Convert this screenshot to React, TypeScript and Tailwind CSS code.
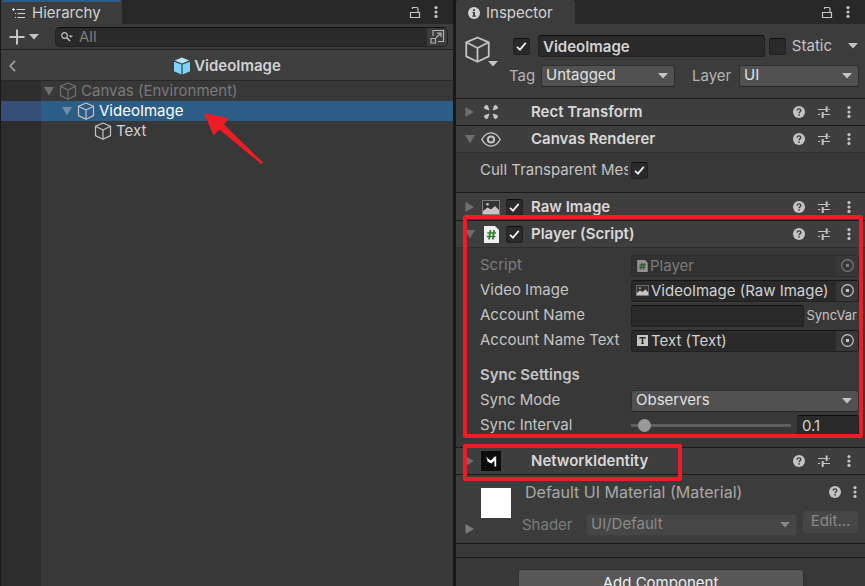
import { useState } from "react";
import type { ReactNode } from "react";
import clsx from "clsx";

type IconProps = { className?: string };

function CubeIcon({ className }: IconProps) {
	return (
		<svg viewBox="0 0 18 18" fill="none" stroke="currentColor" strokeWidth="1.2" strokeLinejoin="round" className={clsx("shrink-0", className)}>
			<path d="M9 1 16.5 4.2V13.6L9 17.2 1.500 13.6V4.200Z" />
			<path d="M1.500 4.200 9 8 16.500 4.200M9 8V17.200" />
		</svg>
	);
}

function PrefabIcon() {
	return (
		<svg viewBox="0 0 18 18" className="size-[18px] shrink-0">
			<path d="M9 .5 16.300 3.500 9 6.500 1.700 3.500Z" fill="#b5e6fb" />
			<path d="M1 4.700 8.400 7.600V17.500L1 14.300Z" fill="#7dd4fa" />
			<path d="M17 4.700 9.600 7.600V17.500L17 14.300Z" fill="#7dd4fa" />
		</svg>
	);
}

function Caret({ className }: IconProps) {
	return (
		<svg viewBox="0 0 10 6" fill="currentColor" className={clsx("h-[6px] w-[10px] shrink-0", className)}>
			<path d="M0 0H10L5 5.500Z" />
		</svg>
	);
}

function Foldout({ open, className }: { open: boolean; className?: string }) {
	return (
		<svg viewBox="0 0 10 10" fill="currentColor" className={clsx("size-[10px] shrink-0", className)}>
			{open ? <path d="M0 1H10L5 9.500Z" /> : <path d="M.5 0V10L9 5Z" />}
		</svg>
	);
}

function LockIcon() {
	return (
		<svg viewBox="0 0 12 13" fill="none" stroke="currentColor" strokeWidth="1.200" className="h-[13px] w-[12px]">
			<path d="M1.500 6.500H10.500V11.500H1.500ZM3 1.500H7.600Q9 1.500 9 3V6.500M3.500 1V3" />
		</svg>
	);
}

function DotsIcon() {
	return (
		<svg viewBox="0 0 4 12" fill="currentColor" className="h-[12px] w-[4px]">
			<circle cx="2" cy="1.600" r="1.600" />
			<circle cx="2" cy="6" r="1.600" />
			<circle cx="2" cy="10.400" r="1.600" />
		</svg>
	);
}

function HelpIcon() {
	return (
		<svg viewBox="0 0 12 12" className="size-[12px]">
			<circle cx="6" cy="6" r="6" fill="currentColor" />
			<path d="M4.100 4.600Q4.200 2.900 6 2.900T7.900 4.500Q7.900 5.300 6.900 5.900 6.100 6.400 6.100 7.200" fill="none" stroke="#3c3c3c" strokeWidth="1.400" />
			<rect x="5.300" y="8.200" width="1.500" height="1.500" fill="#3c3c3c" />
		</svg>
	);
}

function PresetIcon() {
	return (
		<svg viewBox="0 0 12 12" fill="none" stroke="currentColor" className="size-[12px]">
			<path d="M0 3.500H8M0 8.500H2M4.500 8.500H12M10.500 3.500H12" />
			<path d="M8.700 .5V6M4.700 6V12" strokeWidth="2" />
		</svg>
	);
}

function InfoIcon() {
	return (
		<svg viewBox="0 0 12 12" className="size-[12px]">
			<circle cx="6" cy="6" r="6" fill="currentColor" />
			<path d="M5 2.200H7V4H5ZM4.500 5H7V8.500H8V9.700H4.300V8.500H5.200V6.200H4.500Z" fill="#3c3c3c" />
		</svg>
	);
}

function HierarchyIcon() {
	return (
		<svg viewBox="0 0 14 11" stroke="currentColor" strokeWidth="1.200" className="h-[11px] w-[14px]">
			<path d="M0 1.500H3M1.500 0V3M4.500 1.500H13M5.500 5.500H13M5.500 9.500H13M3 5.500H4M3 9.500H4" />
		</svg>
	);
}

function RectTransformIcon() {
	return (
		<svg viewBox="0 0 16 16" fill="currentColor" className="size-[16px]">
			<path d="M.8 3.200 3.200.8 5 1.700 6.500 6.500 1.700 5ZM15.200 3.200 12.800.8 11 1.700 9.500 6.500 14.300 5ZM.8 12.800 3.200 15.200 5 14.300 6.500 9.500 1.700 11ZM15.200 12.800 12.800 15.200 11 14.300 9.500 9.500 14.300 11Z" />
		</svg>
	);
}

function EyeIcon() {
	return (
		<svg viewBox="0 0 20 15" fill="none" stroke="currentColor" strokeWidth="1.400" className="h-[15px] w-[20px]">
			<path d="M.800 7.500Q4.500 .900 10 .900T19.200 7.500Q15.500 14.100 10 14.100T.800 7.500Z" />
			<circle cx="10" cy="7.500" r="3.100" strokeWidth="2" />
		</svg>
	);
}

function PictureIcon({ className }: IconProps) {
	return (
		<svg viewBox="0 0 18 15" className={clsx("shrink-0", className)}>
			<rect x=".5" y=".5" width="17" height="14" fill="#333333" stroke="#7c7c7c" />
			<path d="M1 11 5.500 7.500 9 9.500 13 6 17 10V14H1Z" fill="#c4c4c4" />
			<circle cx="5.500" cy="4.200" r="1.300" fill="#c4c4c4" />
		</svg>
	);
}

function ScriptIcon({ className }: IconProps) {
	return (
		<svg viewBox="0 0 15 17" className={clsx("shrink-0", className)}>
			<path d="M0 0H11L15 4V17H0Z" fill="#f0f0f0" />
			<path d="M6.500 4 5 13.500M10.200 4 8.700 13.500M3.300 7H12M2.800 10.500H11.500" stroke="#2f7d32" strokeWidth="1.700" fill="none" />
		</svg>
	);
}

function TextAssetIcon() {
	return (
		<svg viewBox="0 0 11 11" className="mr-px ml-px size-[11px] shrink-0">
			<rect width="11" height="11" fill="#c4c4c4" />
			<path d="M2.500 2H8.500V4H7.500V3.200H6.300V8.300H7V9H4V8.300H4.700V3.200H3.500V4H2.500Z" fill="#2a2a2a" />
		</svg>
	);
}

function MirrorIcon() {
	return (
		<svg viewBox="0 0 20 20" className="size-[20px]">
			<rect width="20" height="20" fill="#0c0c0c" />
			<path d="M4.700 5.700 10 9.500 13.700 5.500H15.200V15.500H13.400V9.500L10.500 12.500 6.500 10.500 6.200 8.300Z" fill="#fff" />
		</svg>
	);
}

function TargetIcon() {
	return (
		<svg viewBox="0 0 13 13" fill="none" stroke="currentColor" className="size-[13px]">
			<circle cx="6.500" cy="6.500" r="5.800" strokeWidth="1.200" />
			<rect x="5" y="5" width="3" height="3" fill="currentColor" stroke="none" />
		</svg>
	);
}

function IconButton({ label, children, className }: { label: string; children: ReactNode; className?: string }) {
	return (
		<button aria-label={label} className={clsx("flex shrink-0 items-center justify-center text-[#c4c4c4]", className)}>
			{children}
		</button>
	);
}

function Checkbox({ id, label, defaultChecked = false }: { id?: string; label?: string; defaultChecked?: boolean }) {
	return (
		<span className="grid size-[17px] shrink-0 place-items-center">
			<input
				id={id}
				type="checkbox"
				aria-label={label}
				defaultChecked={defaultChecked}
				className="peer col-start-1 row-start-1 size-[17px] appearance-none rounded-[3px] border border-[#212121] border-t-[#0f0f0f] bg-[#2a2a2a]"
			/>
			<svg viewBox="0 0 12 10" fill="none" stroke="#f0f0f0" strokeWidth="1.900" className="pointer-events-none invisible col-start-1 row-start-1 h-[9px] w-[11px] peer-checked:visible">
				<path d="M1 5.300 4.300 8.500 10.700 1" />
			</svg>
		</span>
	);
}

function Dropdown({ id, value, disabled = false, className }: { id: string; value: string; disabled?: boolean; className?: string }) {
	return (
		<span className={clsx("grid min-w-0 items-center", className)}>
			<select
				id={id}
				disabled={disabled}
				className={clsx(
					"col-start-1 row-start-1 h-[22px] w-full appearance-none rounded-[3px] border px-1 pb-[2px] text-[15px] leading-[18px]",
					disabled ? "border-[#3f3f3f] bg-[#464646] text-[#8a8a8a] opacity-100" : "border-[#303030] border-b-[#242424] bg-[#515151] text-[#e0e0e0]",
				)}
			>
				<option>{value}</option>
			</select>
			<Caret className={clsx("pointer-events-none col-start-1 row-start-1 mr-[7px] justify-self-end", disabled ? "text-[#8a8a8a]" : "text-[#c4c4c4]")} />
		</span>
	);
}

function PanelTab({ title, icon, active, className }: { title: string; icon: ReactNode; active?: boolean; className?: string }) {
	return (
		<header className="flex h-6 shrink-0 items-center bg-[#282828] text-[#d2d2d2]">
			<h2 className={clsx("flex h-6 items-center rounded-t-[3px] border-t-2 bg-[#3c3c3c] text-[15px]", active ? "border-[#2c5d87]" : "border-[#3c3c3c]", className)}>
				{icon}
				{title}
			</h2>
			<IconButton label="Lock" className="ml-auto w-5">
				<LockIcon />
			</IconButton>
			<IconButton label={`${title} menu`} className="mr-[15px] ml-[9px] w-[4px]">
				<DotsIcon />
			</IconButton>
		</header>
	);
}

function TreeRow({ name, indent, leaf, dim, selected }: { name: string; indent: string; leaf?: boolean; dim?: boolean; selected?: boolean }) {
	return (
		<li className={clsx("flex h-5 items-stretch", selected && "bg-[#2c5d87]")}>
			<span className={clsx("w-10 shrink-0", selected ? "bg-[#364f79]" : "bg-[#2d2d2d]")} />
			<button className={clsx("flex items-center text-[15px] leading-5", indent, dim ? "text-[#7a7a7a]" : selected ? "text-white" : "text-[#d2d2d2]")}>
				{!leaf && <Foldout open className={clsx("mr-[5px]", selected ? "text-[#6f8ba5]" : "text-[#6e6e6e]")} />}
				<CubeIcon className={clsx("mr-1 size-[18px]", dim ? "text-[#707070]" : "text-[#c4c4c4]")} />
				{name}
			</button>
		</li>
	);
}

function Hierarchy() {
	return (
		<section className="flex min-w-0 flex-col bg-[#383838]">
			<PanelTab title="Hierarchy" icon={<HierarchyIcon />} active className="gap-[6px] pr-[21px] pl-[11px]" />
			<div className="flex h-[26px] shrink-0 items-center border-b border-[#232323] bg-[#3c3c3c]">
				<IconButton label="Create" className="ml-2 gap-1">
					<svg viewBox="0 0 16 16" stroke="currentColor" strokeWidth="2" className="size-[16px]">
						<path d="M8 .5V15.500M.5 8H15.500" />
					</svg>
					<Caret />
				</IconButton>
				<div className="mr-[5px] ml-4 flex h-5 min-w-0 flex-1 items-center overflow-hidden rounded-[5px] border border-[#212121] border-t-[#0f0f0f] bg-[#2a2a2a]">
					<svg viewBox="0 0 12 10" fill="none" stroke="#c4c4c4" strokeWidth="1.200" className="ml-[5px] h-[10px] w-[12px] shrink-0">
						<circle cx="3.500" cy="3.500" r="2.800" />
						<path d="M5.500 5.500 9 9" strokeWidth="1.500" />
						<path d="M7.500 3.500H12L9.800 5.800Z" fill="#c4c4c4" stroke="none" />
					</svg>
					<input aria-label="Search hierarchy" placeholder="All" className="ml-[6px] min-w-0 flex-1 bg-transparent text-[15px] leading-[18px] outline-none placeholder:text-[#7c7c7c]" />
					<IconButton label="Open in search window" className="h-full w-5 bg-[#3c3c3c]">
						<svg viewBox="0 0 15 15" fill="none" stroke="#b0b0b0" strokeWidth="1.200" className="size-[15px]">
							<path d="M3 7V1.500H13.500V12.500H8M1 9.500H5.500V14H1ZM6 8.700 10.500 4.500M7 4.200H11V8" />
						</svg>
					</IconButton>
				</div>
			</div>
			<div className="grid h-[31px] shrink-0 grid-cols-[22px_1fr_22px] items-center border-b border-[#282828] bg-[#3f3f3f] pt-[2px]">
				<IconButton label="Back">
					<svg viewBox="0 0 7 12" fill="none" stroke="#a0a0a0" strokeWidth="1.700" className="h-[12px] w-[7px]">
						<path d="M6 .8 1.200 6 6 11.200" />
					</svg>
				</IconButton>
				<h3 className="flex items-center justify-center gap-[3px] text-[15px] font-semibold text-[#d2d2d2]">
					<PrefabIcon />
					VideoImage
				</h3>
			</div>
			<div className="relative flex flex-1 flex-col">
				<ul>
					<TreeRow name="Canvas (Environment)" indent="pl-[3px]" dim />
					<TreeRow name="VideoImage" indent="pl-[21px]" selected />
					<TreeRow name="Text" indent="pl-[53px]" leaf />
				</ul>
				<div className="w-10 flex-1 bg-[#2d2d2d]" />
				<svg viewBox="0 0 60 52" fill="#ee1c24" className="pointer-events-none absolute top-8 left-[203px] h-[52px] w-[60px]">
					<path d="M0 0 24.500 5 20 11.500 58.500 49Q59 52 56.500 50.500L15.500 16.500 9.500 22.500Z" />
				</svg>
			</div>
		</section>
	);
}

function ComponentHeader({ title, icon, open = false, toggle = false }: { title: string; icon: ReactNode; open?: boolean; toggle?: boolean }) {
	return (
		<div className={clsx("flex h-[27px] shrink-0 items-center border-b bg-[#3e3e3e] pr-[14px] pl-[9px]", open ? "border-[#303030]" : "border-[#1a1a1a]")}>
			<button aria-label={`Fold ${title}`} className="text-[#6e6e6e]">
				<Foldout open={open} />
			</button>
			<span className="ml-[6px] flex w-5 items-center justify-center text-[#c4c4c4]">{icon}</span>
			<span className="ml-[5px] flex w-[25px]">{toggle && <Checkbox label={`Enable ${title}`} defaultChecked />}</span>
			<h3 className="flex-1 truncate pt-px text-[15px] font-semibold text-[#d8d8d8]">{title}</h3>
			<IconButton label={`${title} help`}>
				<HelpIcon />
			</IconButton>
			<IconButton label={`${title} presets`} className="ml-[13px]">
				<PresetIcon />
			</IconButton>
			<IconButton label={`${title} menu`} className="ml-[17px]">
				<DotsIcon />
			</IconButton>
		</div>
	);
}

function PropertyRow({ label, htmlFor, dim, children }: { label: string; htmlFor: string; dim?: boolean; children: ReactNode }) {
	return (
		<div className="flex h-[25px] items-center pr-[6px] pl-6">
			<label htmlFor={htmlFor} className={clsx("mr-[3px] w-[148px] shrink-0 overflow-hidden text-[15px] whitespace-nowrap", dim ? "text-[#7c7c7c]" : "text-[#c4c4c4]")}>
				{label}
			</label>
			{children}
		</div>
	);
}

function ObjectField({ id, value, icon, disabled = false }: { id: string; value: string; icon: ReactNode; disabled?: boolean }) {
	return (
		<div className={clsx("flex h-[22px] min-w-0 flex-1 items-center rounded-[3px] border pl-1", disabled ? "border-[#2c2c2c] bg-[#323232] text-[#7c7c7c]" : "border-[#212121] border-t-[#151515] bg-[#2a2a2a] text-[#d2d2d2]")}>
			{icon}
			<input id={id} readOnly disabled={disabled} value={value} className="ml-[2px] w-0 min-w-0 flex-1 bg-transparent text-[15px] leading-5 outline-none" />
			<button aria-label={`Select ${value}`} disabled={disabled} className={clsx("flex h-5 w-[22px] shrink-0 items-center justify-center bg-[#373737]", disabled ? "text-[#7c7c7c]" : "text-[#c4c4c4]")}>
				<TargetIcon />
			</button>
		</div>
	);
}

const fieldStyle = "h-[22px] min-w-0 rounded-[3px] border border-[#212121] border-t-[#0d0d0d] bg-[#2a2a2a] px-1 pt-[2px] text-[15px] text-[#d2d2d2] outline-none";

function PlayerScript() {
	const [interval, setSyncInterval] = useState(0.1);

	return (
		<section className="relative shrink-0 border-b border-[#1a1a1a]">
			<ComponentHeader title="Player (Script)" icon={<ScriptIcon className="h-[17px] w-[15px]" />} open toggle />
			<div className="pt-[5px] pb-[9px]">
				<PropertyRow label="Script" htmlFor="script" dim>
					<ObjectField id="script" value="Player" icon={<ScriptIcon className="ml-px h-[12px] w-[11px] opacity-50" />} disabled />
				</PropertyRow>
				<PropertyRow label="Video Image" htmlFor="video-image">
					<ObjectField id="video-image" value="VideoImage (Raw Image)" icon={<PictureIcon className="h-[11px] w-[13px]" />} />
				</PropertyRow>
				<PropertyRow label="Account Name" htmlFor="account-name">
					<input id="account-name" className={clsx(fieldStyle, "flex-1")} />
					<span className="mr-[2px] ml-[2px] text-[13px] text-[#c4c4c4]">SyncVar</span>
				</PropertyRow>
				<PropertyRow label="Account Name Text" htmlFor="account-name-text">
					<ObjectField id="account-name-text" value="Text (Text)" icon={<TextAssetIcon />} />
				</PropertyRow>
				<h4 className="mt-[10px] flex h-[25px] items-center pl-6 text-[15px] font-semibold text-[#c4c4c4]">Sync Settings</h4>
				<PropertyRow label="Sync Mode" htmlFor="sync-mode">
					<Dropdown id="sync-mode" value="Observers" className="flex-1" />
				</PropertyRow>
				<PropertyRow label="Sync Interval" htmlFor="sync-interval">
					<input
						id="sync-interval"
						type="range"
						min={0}
						max={2}
						step={0.1}
						value={interval}
						onChange={(e) => setSyncInterval(Number(e.target.value))}
						className="mr-[6px] h-[13px] min-w-0 flex-1 appearance-none bg-transparent [&::-webkit-slider-runnable-track]:h-[3px] [&::-webkit-slider-runnable-track]:bg-[#5e5e5e] [&::-webkit-slider-thumb]:-mt-[5px] [&::-webkit-slider-thumb]:size-[13px] [&::-webkit-slider-thumb]:appearance-none [&::-webkit-slider-thumb]:rounded-full [&::-webkit-slider-thumb]:bg-[#999999]"
					/>
					<input aria-label="Sync interval value" value={interval} onChange={(e) => setSyncInterval(Number(e.target.value))} className={clsx(fieldStyle, "w-[62px]")} />
				</PropertyRow>
			</div>
			<div className="pointer-events-none absolute -top-[6px] right-[2px] bottom-[9px] left-[7px] rounded-[2px] border-4 border-[#ee1c24]" />
		</section>
	);
}

function Inspector() {
	return (
		<section className="flex min-w-0 flex-col overflow-hidden bg-[#383838]">
			<PanelTab title="Inspector" icon={<InfoIcon />} className="gap-[6px] pr-[22px] pl-3" />
			<div className="flex h-[75px] shrink-0 border-b border-[#1a1a1a] bg-[#3c3c3c] pt-[11px] pr-[6px] pl-2">
				<IconButton label="Select icon" className="h-8 w-[34px] items-start">
					<CubeIcon className="mt-px size-[27px]" />
					<Caret className="-ml-[3px] self-end" />
				</IconButton>
				<div className="ml-[11px] flex min-w-0 flex-1 flex-col gap-2">
					<div className="flex h-[22px] items-center">
						<span className="ml-1 flex">
							<Checkbox label="Active" defaultChecked />
						</span>
						<input aria-label="Object name" defaultValue="VideoImage" className={clsx(fieldStyle, "ml-2 w-0 flex-1 font-semibold")} />
						<span className="ml-1 flex">
							<Checkbox id="static" />
						</span>
						<label htmlFor="static" className="ml-[6px] text-[15px] text-[#c4c4c4]">
							Static
						</label>
						<IconButton label="Static flags" className="mr-px ml-4">
							<Caret />
						</IconButton>
					</div>
					<div className="flex h-[22px] items-center text-[15px] text-[#b4b4b4]">
						<label htmlFor="tag" className="w-8 shrink-0">
							Tag
						</label>
						<Dropdown id="tag" value="Untagged" className="flex-[134]" />
						<label htmlFor="layer" className="ml-[17px] w-[47px] shrink-0">
							Layer
						</label>
						<Dropdown id="layer" value="UI" className="flex-[120]" />
					</div>
				</div>
			</div>
			<ComponentHeader title="Rect Transform" icon={<RectTransformIcon />} />
			<section className="shrink-0 border-b border-[#1a1a1a]">
				<ComponentHeader title="Canvas Renderer" icon={<EyeIcon />} open />
				<div className="pt-[5px] pb-[9px]">
					<PropertyRow label="Cull Transparent Mesh" htmlFor="cull">
						<Checkbox id="cull" defaultChecked />
					</PropertyRow>
				</div>
			</section>
			<div className="shrink-0 bg-[#3e3e3e] pt-px">
				<ComponentHeader title="Raw Image" icon={<PictureIcon className="h-[15px] w-[18px]" />} toggle />
			</div>
			<PlayerScript />
			<div className="relative shrink-0">
				<ComponentHeader title="NetworkIdentity" icon={<MirrorIcon />} />
				<div className="pointer-events-none absolute -top-1 -bottom-[6px] left-[7px] w-[219px] rounded-[2px] border-4 border-[#ee1c24]" />
			</div>
			<section className="flex h-[69px] shrink-0 border-b border-[#1a1a1a] bg-[#3c3c3c] pr-[7px] pl-[9px]">
				<button aria-label="Fold material" className="mb-[9px] self-end text-[#7c7c7c]">
					<Foldout open={false} />
				</button>
				<div className="mt-[13px] ml-[6px] size-[30px] shrink-0 bg-white" />
				<div className="ml-[11px] min-w-0 flex-1 pt-[5px]">
					<div className="flex h-[23px] items-center pr-px">
						<h3 className="ml-[3px] flex-1 truncate text-[16px] text-[#a8a8a8]">Default UI Material (Material)</h3>
						<IconButton label="Material help">
							<HelpIcon />
						</IconButton>
						<IconButton label="Material menu" className="ml-3">
							<DotsIcon />
						</IconButton>
					</div>
					<div className="mt-2 flex items-end">
						<label htmlFor="shader" className="w-16 shrink-0 text-[15px] leading-[22px] text-[#7c7c7c]">
							Shader
						</label>
						<Dropdown id="shader" value="UI/Default" disabled className="flex-1" />
						<button disabled className="mb-[3px] ml-[6px] h-[22px] w-[55px] rounded-[3px] bg-[#464646] pb-[2px] text-[15px] leading-5 text-[#8a8a8a]">
							Edit...
						</button>
					</div>
				</div>
			</section>
			<div className="h-[14px] shrink-0 border-b border-[#1a1a1a]" />
			<button className="mx-auto mt-[11px] h-7 w-[286px] shrink-0 rounded-[3px] border border-[#303030] bg-[#585858] text-[15px] text-[#eeeeee]">Add Component</button>
		</section>
	);
}

export default function App() {
	return (
		<main className="grid h-screen grid-cols-[452fr_409fr] gap-[3px] overflow-hidden bg-[#191919] pl-px font-['Inter',sans-serif]">
			<Hierarchy />
			<Inspector />
		</main>
	);
}
